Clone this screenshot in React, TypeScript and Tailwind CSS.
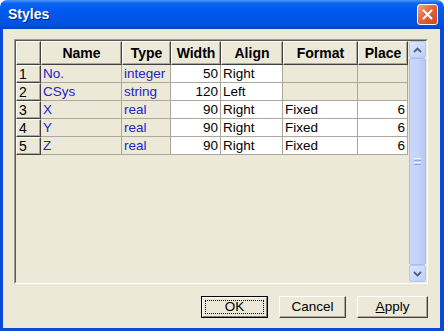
import React from "react";

const font = { fontFamily: '"Liberation Sans", Arial, sans-serif' };

type Row = {
  n: string;
  name: string;
  type: string;
  width: string;
  align: string;
  format: string;
  place: string;
  editable: boolean;
};

const rows: Row[] = [
  { n: "1", name: "No.", type: "integer", width: "50", align: "Right", format: "", place: "", editable: false },
  { n: "2", name: "CSys", type: "string", width: "120", align: "Left", format: "", place: "", editable: false },
  { n: "3", name: "X", type: "real", width: "90", align: "Right", format: "Fixed", place: "6", editable: true },
  { n: "4", name: "Y", type: "real", width: "90", align: "Right", format: "Fixed", place: "6", editable: true },
  { n: "5", name: "Z", type: "real", width: "90", align: "Right", format: "Fixed", place: "6", editable: true },
];

const headers = ["", "Name", "Type", "Width", "Align", "Format", "Place"];

function HeaderCell({ children }: { children?: React.ReactNode }) {
  return (
    <div className="h-[24px] bg-[#ece9d8] border-t border-l border-white border-r border-b border-r-[#404040] border-b-[#404040] shadow-[inset_-1px_-1px_0_#aca899] flex items-center justify-center font-bold text-[14px] text-black leading-none">
      {children}
    </div>
  );
}

function RowHead({ children }: { children: React.ReactNode }) {
  return (
    <div className="h-[18px] bg-[#ece9d8] border-t border-l border-white border-r border-b border-r-[#404040] border-b-[#404040] shadow-[inset_-1px_-1px_0_#aca899] flex items-center pl-[2px] text-[14px] text-black leading-none">
      {children}
    </div>
  );
}

function Cell({
  children,
  white,
  right,
  blue,
}: {
  children?: React.ReactNode;
  white?: boolean;
  right?: boolean;
  blue?: boolean;
}) {
  return (
    <div
      className={
        "h-[18px] border-r border-b border-[#aca899] flex items-center px-[2px] text-[13.5px] leading-none " +
        (white ? "bg-white " : "bg-[#ece9d8] ") +
        (right ? "justify-end " : "justify-start ") +
        (blue ? "text-[#2323c8]" : "text-black")
      }
    >
      {children}
    </div>
  );
}

function ScrollBar() {
  return (
    <div className="w-[17px] h-full flex flex-col bg-[#eef0fa] ">
      <div className="h-[17px] rounded-[2px] border border-[#b5c9f5] bg-gradient-to-br from-[#dbe6fe] to-[#bccff8] flex items-center justify-center">
        <svg width="9" height="6" viewBox="0 0 9 6">
          <path d="M1 5 L4.5 1.5 L8 5" stroke="#4d6185" strokeWidth="1.8" fill="none" />
        </svg>
      </div>
      <div className="flex-1 rounded-[2px] border border-[#a9bdf0] bg-gradient-to-r from-[#c9d8fc] via-[#c4d5fb] to-[#b6c9f5] flex items-center justify-center">
        <div className="flex flex-col gap-[1px]">
          <div className="w-[7px] h-[1px] bg-[#eef3ff]" />
          <div className="w-[7px] h-[1px] bg-[#8ca5dd]" />
          <div className="w-[7px] h-[1px] bg-[#eef3ff]" />
          <div className="w-[7px] h-[1px] bg-[#8ca5dd]" />
        </div>
      </div>
      <div className="h-[17px] rounded-[2px] border border-[#b5c9f5] bg-gradient-to-br from-[#dbe6fe] to-[#bccff8] flex items-center justify-center">
        <svg width="9" height="6" viewBox="0 0 9 6">
          <path d="M1 1 L4.5 4.5 L8 1" stroke="#4d6185" strokeWidth="1.8" fill="none" />
        </svg>
      </div>
    </div>
  );
}

function Button({
  children,
  def,
}: {
  children: React.ReactNode;
  def?: boolean;
}) {
  return (
    <div
      className={
        "h-[22px] bg-[#ece9d8] flex items-center justify-center text-[13.5px] text-black relative " +
        (def
          ? "border border-black"
          : "border-t border-l border-white border-r border-b border-r-[#404040] border-b-[#404040]")
      }
    >
      {def ? (
        <div className="absolute inset-0 border-t border-l border-white border-r border-b border-r-[#808080] border-b-[#808080]">
          <div className="absolute inset-[2px] border border-dotted border-black" />
        </div>
      ) : (
        <div className="absolute inset-0 shadow-[inset_-1px_-1px_0_#aca899]" />
      )}
      <span className="relative">{children}</span>
    </div>
  );
}

export default function App() {
  return (
    <div className="w-[444px] h-[331px] flex flex-col overflow-hidden bg-white" style={font}>
      {/* Title bar */}
      <div className="h-[29px] rounded-t-[7px] bg-[linear-gradient(to_bottom,#4a95f8_0%,#0d63f2_12%,#005bf0_30%,#0056e8_60%,#0051e0_85%,#0043ca_100%)] flex items-center justify-between pl-[8px] pr-[6px]">
        <span className="text-white font-bold text-[14px] [text-shadow:1px_1px_0_#0a1e8c]">
          Styles
        </span>
        <div className="w-[21px] h-[21px] rounded-[3px] border border-white bg-[linear-gradient(135deg,#f3a384_0%,#e3653f_45%,#cc4420_100%)] flex items-center justify-center">
          <svg width="11" height="11" viewBox="0 0 11 11">
            <path d="M1.5 1.5 L9.5 9.5 M9.5 1.5 L1.5 9.5" stroke="white" strokeWidth="2" strokeLinecap="round" />
          </svg>
        </div>
      </div>

      {/* Body */}
      <div className="flex-1 bg-[#ece9d8] border-l-[3px] border-r-[4px] border-b-[3px] border-[#0a4ad6] flex flex-col pl-[11px] pr-[12px] pt-[10px]">
        {/* Grid frame */}
        <div className="h-[245px] border-t border-l border-[#9d9a8e] border-r border-b border-r-white border-b-white">
          <div className="h-full flex border-t border-l border-[#5a5850] border-r border-b border-r-[#ece9d8] border-b-[#ece9d8]">
            <div className="w-[392px] h-full">
              <div className="grid grid-cols-[25px_81px_49px_50px_62px_75px_50px]">
                {headers.map((h, i) => (
                  <HeaderCell key={i}>{h}</HeaderCell>
                ))}
                {rows.map((r) => (
                  <React.Fragment key={r.n}>
                    <RowHead>{r.n}</RowHead>
                    <Cell blue>{r.name}</Cell>
                    <Cell blue>{r.type}</Cell>
                    <Cell white right>{r.width}</Cell>
                    <Cell white>{r.align}</Cell>
                    <Cell white={r.editable}>{r.format}</Cell>
                    <Cell white={r.editable} right>{r.place}</Cell>
                  </React.Fragment>
                ))}
              </div>
            </div>
            <div className="w-[1px]" />
            <ScrollBar />
          </div>
        </div>

        {/* Buttons */}
        <div className="flex justify-end gap-[11px] mt-[12px]">
          <div className="w-[67px]">
            <Button def>OK</Button>
          </div>
          <div className="w-[67px]">
            <Button>Cancel</Button>
          </div>
          <div className="w-[71px]">
            <Button>
              <span className="underline">A</span>pply
            </Button>
          </div>
        </div>
      </div>
    </div>
  );
}
